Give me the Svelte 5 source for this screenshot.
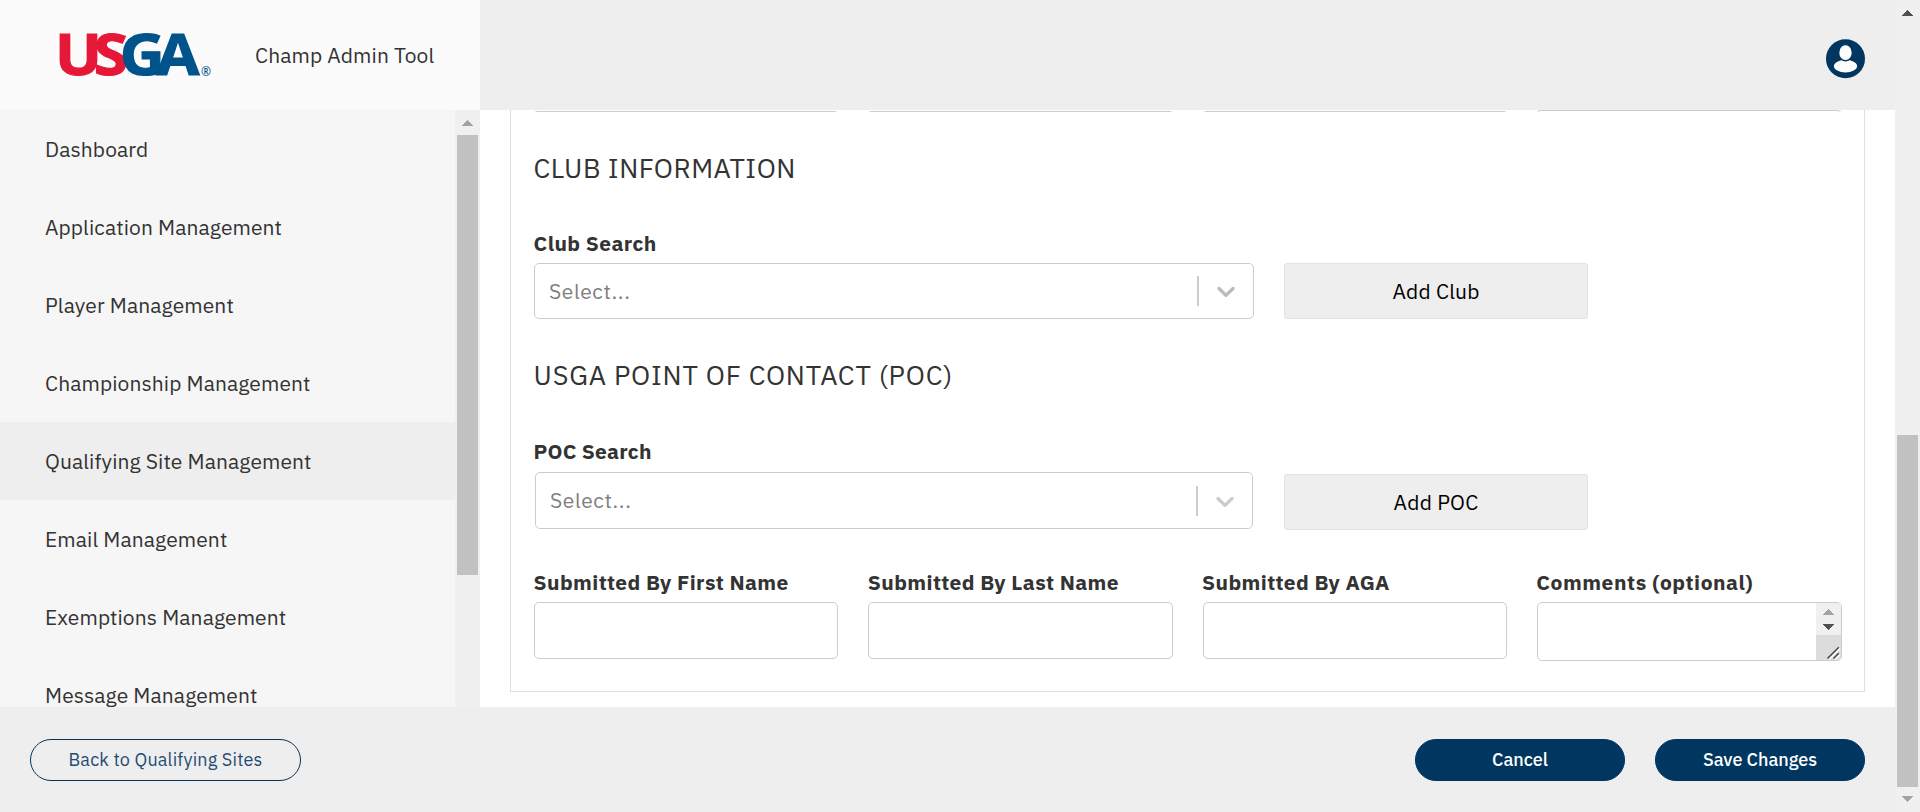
<script>
  const nav = [
    'Dashboard',
    'Application Management',
    'Player Management',
    'Championship Management',
    'Qualifying Site Management',
    'Email Management',
    'Exemptions Management',
    'Message Management'
  ];
  const active = 'Qualifying Site Management';
  const submitted = ['Submitted By First Name', 'Submitted By Last Name', 'Submitted By AGA'];
</script>

{#snippet arrow(dir, color)}
  <svg class="arrow" width="11" height="6" viewBox="0 0 11 6" shape-rendering="crispEdges" aria-hidden="true">
    <path d={dir === 'up' ? 'M5.5 0 11 5.5V6H0V5.5Z' : 'M5.5 6 11 .5V0H0V.5Z'} fill={color} />
  </svg>
{/snippet}

{#snippet select()}
  <span class="placeholder">Select...</span>
  <span class="separator"></span>
  <svg class="chevron" width="30" height="30" viewBox="0 0 20 20" aria-hidden="true">
    <path d="M4.516 7.548c0.436-0.446 1.043-0.481 1.576 0l3.908 3.747 3.908-3.747c0.533-0.481 1.141-0.446 1.574 0 0.436 0.445 0.408 1.197 0 1.615-0.406 0.418-4.695 4.502-4.695 4.502-0.217 0.223-0.502 0.335-0.787 0.335s-0.57-0.112-0.789-0.335c0 0-4.287-4.084-4.695-4.502s-0.436-1.17 0-1.615z" />
  </svg>
{/snippet}

<div class="window">
  <div class="app">
    <header>
      <div class="brand">
        <svg class="logo" width="152" height="44" viewBox="0 0 152 44" role="img" aria-label="USGA">
          <text
            class="wordmark"
            transform="translate(-5 42) scale(1.1 1)"
            font-family="Open Sans"
            font-weight="750"
            font-size="56.5"
            stroke-width="1.2"><tspan fill="#e51937" stroke="#e51937">US</tspan><tspan fill="#00538b" stroke="#00538b">GA</tspan></text>
          <text x="141" y="42.5" font-family="Open Sans" font-weight="600" font-size="12" fill="#00538b">®</text>
        </svg>
        <span class="title">Champ Admin Tool</span>
      </div>
      <svg class="user" width="40" height="40" viewBox="0 0 40 40" aria-hidden="true">
        <circle cx="19.5" cy="19.8" r="19.5" fill="#003660" />
        <ellipse cx="19.5" cy="27.1" rx="11.6" ry="6.3" fill="#fff" />
        <rect x="12.7" y="5.6" width="13.6" height="16.2" rx="6.6" ry="7.6" fill="#fff" stroke="#003660" stroke-width="1.4" />
      </svg>
    </header>

    <div class="body">
      <nav>
        <ul>
          {#each nav as item}
            <li class:active={item === active}>{item}</li>
          {/each}
        </ul>
        <div class="bar side">
          {@render arrow('up', '#a3a3a3')}
          <div class="thumb"></div>
        </div>
      </nav>

      <main>
        <section class="panel">
          <div class="grid cut">
            <i></i><i></i><i></i><i class="short"></i>
          </div>

          <h2>CLUB INFORMATION</h2>
          <div class="search">
            <div class="field">
              <span class="label">Club Search</span>
              <div class="control select club">{@render select()}</div>
            </div>
            <button class="add">Add Club</button>
          </div>

          <h2 class="poc-title">USGA POINT OF CONTACT (POC)</h2>
          <div class="search poc">
            <div class="field">
              <span class="label">POC Search</span>
              <div class="control select">{@render select()}</div>
            </div>
            <button class="add">Add POC</button>
          </div>

          <div class="grid">
            {#each submitted as name}
              <div class="field">
                <span class="label">{name}</span>
                <div class="control"></div>
              </div>
            {/each}
            <div class="field">
              <span class="label wide">Comments (optional)</span>
              <div class="control area">
                <div class="spin">
                  {@render arrow('up', '#a3a3a3')}
                  {@render arrow('down', '#505050')}
                </div>
                <div class="corner">
                  <svg width="25" height="25" viewBox="0 0 25 25" aria-hidden="true">
                    <path d="M13 24.5 24 13.5M19 24.5 24 19.5" stroke="#fff" stroke-width="1.3" />
                    <path d="M11.5 23.5 22.8 12.2M17.5 23.5 22.8 18.2" stroke="#484848" stroke-width="1.5" />
                  </svg>
                </div>
              </div>
            </div>
          </div>
        </section>
      </main>
    </div>

    <footer>
      <button class="pill outline">Back to Qualifying Sites</button>
      <div class="actions">
        <button class="pill">Cancel</button>
        <button class="pill">Save Changes</button>
      </div>
    </footer>
  </div>

  <div class="bar page">
    {@render arrow('up', '#505050')}
    <div class="thumb"></div>
    {@render arrow('down', '#a3a3a3')}
  </div>
</div>

<style>
  :global(body) {
    margin: 0;
    overflow: hidden;
  }
  .window,
  .window * {
    box-sizing: border-box;
  }
  .window {
    display: flex;
    width: 1920px;
    height: 812px;
    background: #fff;
    color: #333;
    font: 400 21px 'IBM Plex Sans', 'Noto Sans', sans-serif;
    letter-spacing: 0.1px;
  }
  .app {
    display: flex;
    flex-direction: column;
    width: 1895px;
  }
  header {
    display: flex;
    align-items: center;
    justify-content: space-between;
    height: 110px;
    padding-right: 29px;
    background: #eee;
  }
  .brand {
    display: flex;
    align-items: center;
    width: 480px;
    height: 110px;
    padding-left: 60px;
    background: #fbfbfb;
  }
  .logo {
    overflow: visible;
    letter-spacing: 0;
  }
  .wordmark {
    letter-spacing: -7.5px;
  }
  .title {
    margin-left: 43px;
  }
  .user {
    margin-top: 7px;
  }
  .body {
    display: flex;
    height: 597px;
    overflow: hidden;
  }
  nav {
    display: flex;
    width: 480px;
    height: 597px;
    overflow: hidden;
    background: #f6f6f6;
  }
  ul {
    width: 455px;
    margin: 0;
    padding: 0;
    list-style: none;
  }
  li {
    height: 78px;
    padding-left: 45px;
    line-height: 78px;
  }
  li.active {
    background: #eee;
  }
  .bar {
    display: flex;
    flex-direction: column;
    align-items: center;
    width: 25px;
    padding-top: 10px;
    background: #f0f0f0;
  }
  .thumb {
    width: 21px;
    background: #c1c1c1;
  }
  .side .thumb {
    height: 440px;
    margin-top: 9px;
  }
  .page .thumb {
    height: 352px;
    margin: 419px 0 9px;
  }
  .arrow {
    display: block;
    flex: none;
  }
  main {
    width: 1415px;
    padding: 0 30px 15px;
  }
  .panel {
    height: 582px;
    padding: 0 23px;
    border: 1px solid #dfdfdf;
    border-top: 0;
  }
  .grid {
    display: grid;
    grid-template-columns: repeat(4, 1fr);
    gap: 30px;
  }
  .cut {
    height: 2px;
    overflow: hidden;
    align-items: end;
  }
  .cut i {
    height: 12px;
    border: 1px solid #ccc;
    border-radius: 3px;
  }
  .cut .short {
    margin-bottom: 1px;
  }
  h2 {
    height: 41px;
    margin: 35px 0 40px -0.4px;
    font-size: 27px;
    font-weight: 400;
    line-height: 41px;
    letter-spacing: 0.48px;
  }
  .poc-title {
    margin: 35px 0 41px -0.4px;
    letter-spacing: 0.78px;
  }
  .search {
    display: flex;
    align-items: flex-end;
    gap: 30px;
  }
  .search .field {
    width: 720px;
  }
  .label {
    display: block;
    height: 35px;
    margin-left: -0.4px;
    font-weight: 700;
    line-height: 30px;
    letter-spacing: 0.37px;
  }
  .wide {
    letter-spacing: 0.55px;
  }
  .control {
    height: 57px;
    border: 1px solid #ccc;
    border-radius: 5px;
    background: #fff;
  }
  .select {
    display: flex;
    align-items: center;
    padding: 0 12px 0 14px;
    color: #808080;
    letter-spacing: 0.6px;
  }
  .club {
    height: 56px;
  }
  .placeholder {
    flex: 1;
  }
  .poc .placeholder {
    padding-bottom: 1px;
  }
  .separator {
    width: 2px;
    height: 30px;
    margin-right: 12px;
    background: #ccc;
  }
  .chevron {
    fill: #ccc;
  }
  .club .chevron {
    fill: #bbb;
  }
  .poc .label {
    height: 36px;
    letter-spacing: 0.2px;
  }
  .poc .control {
    margin: 0 1px;
  }
  .poc .field {
    padding-bottom: 1px;
  }
  .poc {
    margin-bottom: 37px;
  }
  .add {
    width: 304px;
    height: 56px;
    padding: 0;
    border: 1px solid #e2e2e2;
    border-radius: 3px;
    background: #eee;
    color: #000;
    font: inherit;
    letter-spacing: 0.2px;
  }
  .area {
    display: flex;
    flex-direction: column;
    align-items: flex-end;
    height: 59px;
    margin-right: -0.75px;
    overflow: hidden;
  }
  .spin {
    display: flex;
    flex-direction: column;
    align-items: center;
    gap: 9px;
    width: 25px;
    height: 32px;
    padding-top: 6px;
    background: #f0f0f0;
  }
  .corner {
    width: 25px;
    height: 25px;
    background: #dcdcdc;
  }
  .corner svg {
    display: block;
  }
  footer {
    display: flex;
    align-items: flex-start;
    justify-content: space-between;
    height: 105px;
    padding: 32px 30px 0;
    background: #eee;
  }
  .actions {
    display: flex;
    gap: 30px;
  }
  .pill {
    width: 210px;
    height: 42px;
    padding: 0 0 2px;
    border: 1px solid #003660;
    border-radius: 21px;
    background: #003660;
    color: #fff;
    font: 500 18px 'IBM Plex Sans', 'Noto Sans', sans-serif;
    letter-spacing: -0.02px;
  }
  .outline {
    width: 271px;
    background: transparent;
    color: #1f4d74;
    font-weight: 400;
    letter-spacing: 0.17px;
  }
</style>
